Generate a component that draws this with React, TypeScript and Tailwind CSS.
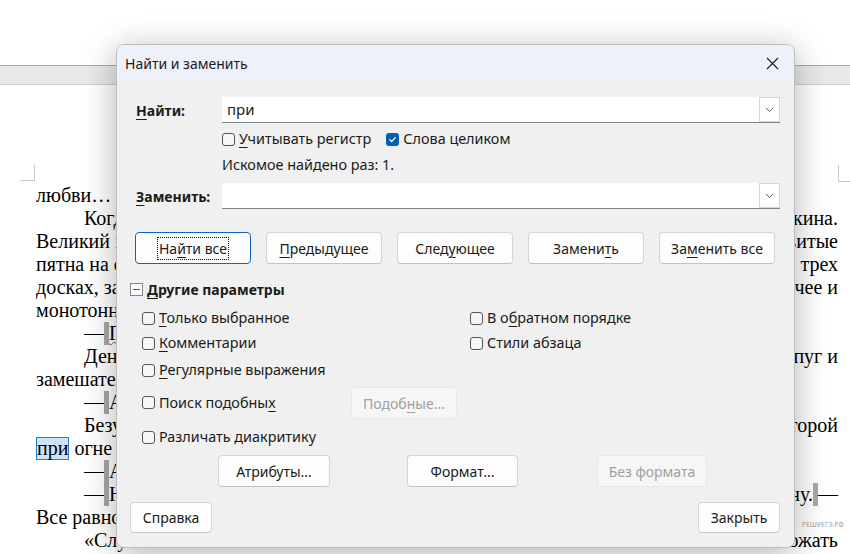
import React from "react";

const UI = { fontFamily: '"Noto Sans", "Open Sans", sans-serif' };
const SERIF = { fontFamily: '"Liberation Serif", "Times New Roman", serif' };

function U({ children }: { children: React.ReactNode }) {
  return <span className="underline decoration-1 underline-offset-[3px]">{children}</span>;
}

function Box({ checked = false }: { checked?: boolean }) {
  if (checked)
    return (
      <span className="inline-flex h-[13px] w-[13px] shrink-0 items-center justify-center rounded-[3px] bg-[#005fb8]">
        <svg width="9" height="9" viewBox="0 0 9 9">
          <path d="M1.8 4.7 L3.7 6.5 L7.3 2.6" stroke="white" strokeWidth="1.2" fill="none" strokeLinecap="round" strokeLinejoin="round" />
        </svg>
      </span>
    );
  return <span className="inline-block h-[13px] w-[13px] shrink-0 rounded-[3px] border border-[#555] bg-[#f6f6f6]" />;
}

function Btn({
  children,
  w = "w-[116px]",
  h = "h-[32px]",
  disabled = false,
  focused = false,
}: {
  children: React.ReactNode;
  w?: string;
  h?: string;
  disabled?: boolean;
  focused?: boolean;
}) {
  const base = `flex ${w} ${h} shrink-0 items-center justify-center rounded-[4px] text-[14px]`;
  if (disabled)
    return <div className={`${base} border border-[#e8e8e8] bg-[#f6f6f6] text-[#a0a0a0]`}>{children}</div>;
  if (focused)
    return (
      <div className={`${base} border border-[#0a66c2] bg-[#fdfdfd] text-[#1b1b1b]`}>
        <span className="px-[1px] outline outline-1 outline-dotted outline-[#111]">{children}</span>
      </div>
    );
  return <div className={`${base} border border-[#d4d4d4] border-b-[#c2c2c2] bg-[#fdfdfd] text-[#1b1b1b]`}>{children}</div>;
}

function Combo({ value }: { value?: string }) {
  return (
    <div className="flex h-[26px] flex-1 items-stretch border-b border-[#868686] bg-white">
      <div className="flex flex-1 items-center pl-[5px] text-[15px] text-[#1b1b1b]">{value}</div>
      <div className="flex w-[21px] items-center justify-center border border-[#d6d6d6] bg-white">
        <svg width="9" height="6" viewBox="0 0 9 6">
          <path d="M1 1 L4.5 4.5 L8 1" stroke="#606060" strokeWidth="1" fill="none" />
        </svg>
      </div>
    </div>
  );
}

function Mark() {
  return <span className="inline-block h-[23px] w-[5px] bg-[#a8a8a8] align-top" />;
}

function Line({ left, right, indent = false }: { left?: React.ReactNode; right?: React.ReactNode; indent?: boolean }) {
  return (
    <div className="flex h-[23px] items-center justify-between whitespace-nowrap leading-[23px]">
      <span className={indent ? "pl-[48px]" : ""}>{left}</span>
      <span>{right}</span>
    </div>
  );
}

export default function App() {
  return (
    <div className="relative h-[554px] w-[850px] overflow-hidden bg-white" style={UI}>
      {/* document background */}
      <div className="h-[65px] bg-white" />
      <div className="h-[20px] border-t border-b border-t-[#a9a9a9] border-b-[#cfcfcf] bg-[#e9e9e9]" />
      <div className="relative">
        <div className="absolute left-[20px] top-[80px] h-[16px] w-[15px] border-b border-r border-[#c8c8c8]" />
        <div className="absolute left-[838px] top-[80px] h-[17px] w-[14px] border-b border-l border-[#c8c8c8]" />
      </div>
      <div className="pl-[36px] pr-[12px] pt-[99px] text-[20px] text-black" style={SERIF}>
        <Line left="любви…" />
        <Line indent left="Когда он пришёл" right="Пушкина." />
        <Line left="Великий город" right="увитые" />
        <Line left="пятна на стенах" right="трех" />
        <Line left="досках, залитых" right="лучее и" />
        <Line left="монотонно" />
        <Line
          indent
          left={
            <>
              —<Mark />
              <span className="underline decoration-wavy decoration-[#e03030] decoration-1">Где</span>
            </>
          }
        />
        <Line indent left="День" right="испуг  и" />
        <Line left="замешательство" />
        <Line indent left={<>—<Mark />А</>} />
        <Line indent left="Безусловно" right="которой" />
        <Line
          left={
            <>
              <span className="inline-block h-[23px] border border-[#2b7fd0] bg-[#cce4f7] leading-[21px]">при</span> огне
            </>
          }
        />
        <Line indent left={<>—<Mark />А</>} />
        <Line
          indent
          left={<>—<Mark />Н</>}
          right={
            <>
              страну.<Mark />—
            </>
          }
        />
        <Line left="Все равно" />
        <Line indent left="«Слушай" right="ожать" />
      </div>
      <div className="absolute left-[802px] top-[520px] text-[6.5px] tracking-[0.2px] text-[#9a9a9a]" style={UI}>
        РЕШУЕГЭ.РФ
      </div>

      {/* dialog */}
      <div className="absolute left-[116px] top-[44px] flex h-[504px] w-[679px] flex-col overflow-hidden rounded-[8px] border border-[#bdbdbd] bg-[#f0f0f0] text-[#1b1b1b] shadow-[0_6px_34px_rgba(0,0,0,0.3)]">
        <div className="flex h-[37px] shrink-0 items-center justify-between bg-[#eef1f9] pl-[8px] pr-[15px]">
          <span className="text-[14px]">Найти и заменить</span>
          <svg width="13" height="13" viewBox="0 0 13 13">
            <path d="M1 1 L12 12 M12 1 L1 12" stroke="#1b1b1b" strokeWidth="1.1" />
          </svg>
        </div>

        {/* Find */}
        <div className="mt-[15px] flex items-center pl-[19px] pr-[14px]">
          <span className="w-[86px] text-[14px] font-bold">
            <U>Н</U>айти:
          </span>
          <Combo value="при" />
        </div>
        <div className="mt-[7px] flex h-[18px] items-center pl-[105px] text-[14.4px]">
          <Box />
          <span className="ml-[4px]">
            <U>У</U>читывать регистр
          </span>
          <span className="ml-[15px]">
            <Box checked />
          </span>
          <span className="ml-[4px]">Слова целиком</span>
        </div>
        <div className="mt-[8px] flex h-[18px] items-center pl-[105px] text-[14.4px]">Искомое найдено раз: 1.</div>
        <div className="mt-[9px] flex items-center pl-[19px] pr-[14px]">
          <span className="w-[86px] text-[14px] font-bold">
            <U>З</U>аменить:
          </span>
          <Combo />
        </div>

        {/* main buttons */}
        <div className="mt-[23px] flex gap-[15px] pl-[18px]">
          <Btn focused>
            На<U>й</U>ти все
          </Btn>
          <Btn>
            <U>П</U>редыдущее
          </Btn>
          <Btn>
            След<U>у</U>ющее
          </Btn>
          <Btn>
            Замени<U>т</U>ь
          </Btn>
          <Btn>
            За<U>м</U>енить все
          </Btn>
        </div>

        {/* other options */}
        <div className="mt-[16px] flex h-[18px] items-center pl-[13px]">
          <span className="flex h-[13px] w-[13px] items-center justify-center border border-[#7b8799] bg-[#fafafa]">
            <span className="h-[1px] w-[7px] bg-[#3a5f94]" />
          </span>
          <span className="ml-[4px] text-[14px] font-bold">
            <U>Д</U>ругие параметры
          </span>
        </div>

        <div className="mt-[11px] grid grid-cols-[328px_1fr] pl-[25px] text-[14.4px]">
          <div className="flex h-[18px] items-center">
            <Box />
            <span className="ml-[4px]">
              <U>Т</U>олько выбранное
            </span>
          </div>
          <div className="flex h-[18px] items-center">
            <Box />
            <span className="ml-[4px]">
              В о<U>б</U>ратном порядке
            </span>
          </div>
          <div className="mt-[7px] flex h-[18px] items-center">
            <Box />
            <span className="ml-[4px]">
              <U>К</U>омментарии
            </span>
          </div>
          <div className="mt-[7px] flex h-[18px] items-center">
            <Box />
            <span className="ml-[4px]">Стили абзаца</span>
          </div>
        </div>
        <div className="mt-[9px] flex h-[18px] items-center pl-[25px] text-[14.4px]">
          <Box />
          <span className="ml-[4px]">
            <U>Р</U>егулярные выражения
          </span>
        </div>
        <div className="mt-[8px] flex h-[32px] items-center pl-[25px] text-[14.4px]">
          <div className="flex w-[209px] items-center">
            <Box />
            <span className="ml-[4px]">
              Поиск подобны<U>х</U>
            </span>
          </div>
          <Btn disabled w="w-[106px]">
            Подоб<U>н</U>ые...
          </Btn>
        </div>
        <div className="mt-[9px] flex h-[18px] items-center pl-[25px] text-[14.4px]">
          <Box />
          <span className="ml-[4px]">Различать диакритику</span>
        </div>
        <div className="mt-[9px] flex pl-[101px]">
          <Btn w="w-[112px]">Атрибуты...</Btn>
          <div className="w-[77px]" />
          <Btn w="w-[111px]">Формат...</Btn>
          <div className="w-[79px]" />
          <Btn disabled w="w-[110px]">
            Без формата
          </Btn>
        </div>
        <div className="mt-[15px] flex justify-between pl-[13px] pr-[14px]">
          <Btn w="w-[82px]" h="h-[31px]">
            Справка
          </Btn>
          <Btn w="w-[82px]" h="h-[31px]">
            Закрыть
          </Btn>
        </div>
      </div>
    </div>
  );
}
